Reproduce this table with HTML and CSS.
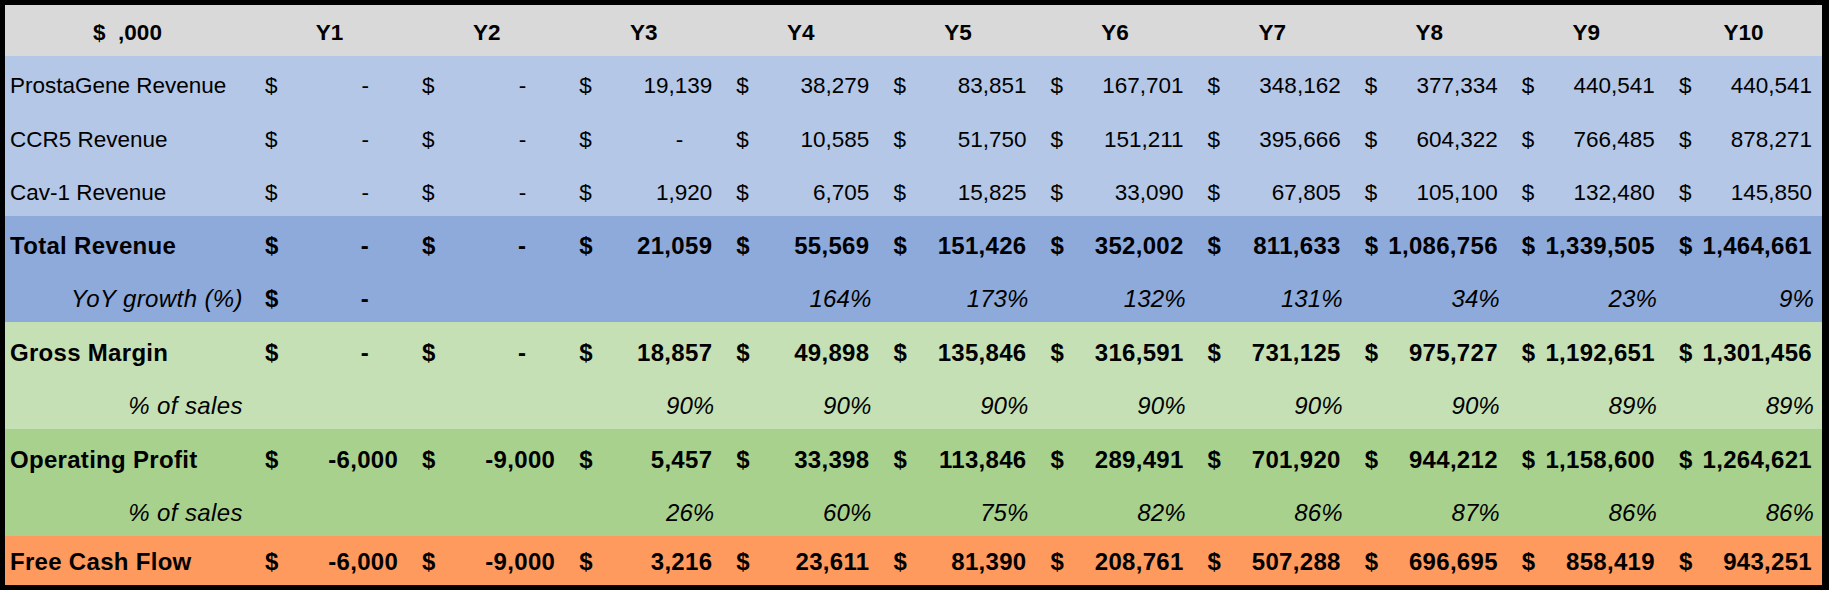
FILE: index.html
```html
<!DOCTYPE html>
<html>
<head>
<meta charset="utf-8">
<link rel="stylesheet" href="styles.css">
</head>
<body>
<div class="sheet">
  <div class="row head h51">
    <div class="lab ctr">$&nbsp; ,000</div>
    <div class="yh">Y1</div><div class="yh">Y2</div><div class="yh">Y3</div><div class="yh">Y4</div><div class="yh">Y5</div>
    <div class="yh">Y6</div><div class="yh">Y7</div><div class="yh">Y8</div><div class="yh">Y9</div><div class="yh">Y10</div>
  </div>

  <div class="row blue1 h53">
    <div class="lab">ProstaGene Revenue</div>
    <div class="cell"><span>$</span><span class="z">-</span></div>
    <div class="cell"><span>$</span><span class="z">-</span></div>
    <div class="cell"><span>$</span><span>19,139</span></div>
    <div class="cell"><span>$</span><span>38,279</span></div>
    <div class="cell"><span>$</span><span>83,851</span></div>
    <div class="cell"><span>$</span><span>167,701</span></div>
    <div class="cell"><span>$</span><span>348,162</span></div>
    <div class="cell"><span>$</span><span>377,334</span></div>
    <div class="cell"><span>$</span><span>440,541</span></div>
    <div class="cell"><span>$</span><span>440,541</span></div>
  </div>

  <div class="row blue1 h54">
    <div class="lab">CCR5 Revenue</div>
    <div class="cell"><span>$</span><span class="z">-</span></div>
    <div class="cell"><span>$</span><span class="z">-</span></div>
    <div class="cell"><span>$</span><span class="z">-</span></div>
    <div class="cell"><span>$</span><span>10,585</span></div>
    <div class="cell"><span>$</span><span>51,750</span></div>
    <div class="cell"><span>$</span><span>151,211</span></div>
    <div class="cell"><span>$</span><span>395,666</span></div>
    <div class="cell"><span>$</span><span>604,322</span></div>
    <div class="cell"><span>$</span><span>766,485</span></div>
    <div class="cell"><span>$</span><span>878,271</span></div>
  </div>

  <div class="row blue1 h53">
    <div class="lab">Cav-1 Revenue</div>
    <div class="cell"><span>$</span><span class="z">-</span></div>
    <div class="cell"><span>$</span><span class="z">-</span></div>
    <div class="cell"><span>$</span><span>1,920</span></div>
    <div class="cell"><span>$</span><span>6,705</span></div>
    <div class="cell"><span>$</span><span>15,825</span></div>
    <div class="cell"><span>$</span><span>33,090</span></div>
    <div class="cell"><span>$</span><span>67,805</span></div>
    <div class="cell"><span>$</span><span>105,100</span></div>
    <div class="cell"><span>$</span><span>132,480</span></div>
    <div class="cell"><span>$</span><span>145,850</span></div>
  </div>

  <div class="row blue2 h53 b">
    <div class="lab">Total Revenue</div>
    <div class="cell"><span>$</span><span class="z">-</span></div>
    <div class="cell"><span>$</span><span class="z">-</span></div>
    <div class="cell"><span>$</span><span>21,059</span></div>
    <div class="cell"><span>$</span><span>55,569</span></div>
    <div class="cell"><span>$</span><span>151,426</span></div>
    <div class="cell"><span>$</span><span>352,002</span></div>
    <div class="cell"><span>$</span><span>811,633</span></div>
    <div class="cell"><span>$</span><span>1,086,756</span></div>
    <div class="cell"><span>$</span><span>1,339,505</span></div>
    <div class="cell"><span>$</span><span>1,464,661</span></div>
  </div>

  <div class="row blue2 h53">
    <div class="lab ri">YoY growth (%)</div>
    <div class="cell b"><span>$</span><span class="z">-</span></div>
    <div class="cell"></div>
    <div class="cell"></div>
    <div class="cell pc"><span>164%</span></div>
    <div class="cell pc"><span>173%</span></div>
    <div class="cell pc"><span>132%</span></div>
    <div class="cell pc"><span>131%</span></div>
    <div class="cell pc"><span>34%</span></div>
    <div class="cell pc"><span>23%</span></div>
    <div class="cell pc"><span>9%</span></div>
  </div>

  <div class="row green1 h54 b">
    <div class="lab">Gross Margin</div>
    <div class="cell"><span>$</span><span class="z">-</span></div>
    <div class="cell"><span>$</span><span class="z">-</span></div>
    <div class="cell"><span>$</span><span>18,857</span></div>
    <div class="cell"><span>$</span><span>49,898</span></div>
    <div class="cell"><span>$</span><span>135,846</span></div>
    <div class="cell"><span>$</span><span>316,591</span></div>
    <div class="cell"><span>$</span><span>731,125</span></div>
    <div class="cell"><span>$</span><span>975,727</span></div>
    <div class="cell"><span>$</span><span>1,192,651</span></div>
    <div class="cell"><span>$</span><span>1,301,456</span></div>
  </div>

  <div class="row green1 h53">
    <div class="lab ri">% of sales</div>
    <div class="cell"></div>
    <div class="cell"></div>
    <div class="cell pc"><span>90%</span></div>
    <div class="cell pc"><span>90%</span></div>
    <div class="cell pc"><span>90%</span></div>
    <div class="cell pc"><span>90%</span></div>
    <div class="cell pc"><span>90%</span></div>
    <div class="cell pc"><span>90%</span></div>
    <div class="cell pc"><span>89%</span></div>
    <div class="cell pc"><span>89%</span></div>
  </div>

  <div class="row green2 h54 b">
    <div class="lab">Operating Profit</div>
    <div class="cell"><span>$</span><span>-6,000</span></div>
    <div class="cell"><span>$</span><span>-9,000</span></div>
    <div class="cell"><span>$</span><span>5,457</span></div>
    <div class="cell"><span>$</span><span>33,398</span></div>
    <div class="cell"><span>$</span><span>113,846</span></div>
    <div class="cell"><span>$</span><span>289,491</span></div>
    <div class="cell"><span>$</span><span>701,920</span></div>
    <div class="cell"><span>$</span><span>944,212</span></div>
    <div class="cell"><span>$</span><span>1,158,600</span></div>
    <div class="cell"><span>$</span><span>1,264,621</span></div>
  </div>

  <div class="row green2 h53">
    <div class="lab ri">% of sales</div>
    <div class="cell"></div>
    <div class="cell"></div>
    <div class="cell pc"><span>26%</span></div>
    <div class="cell pc"><span>60%</span></div>
    <div class="cell pc"><span>75%</span></div>
    <div class="cell pc"><span>82%</span></div>
    <div class="cell pc"><span>86%</span></div>
    <div class="cell pc"><span>87%</span></div>
    <div class="cell pc"><span>86%</span></div>
    <div class="cell pc"><span>86%</span></div>
  </div>

  <div class="row orange h49 b">
    <div class="lab">Free Cash Flow</div>
    <div class="cell"><span>$</span><span>-6,000</span></div>
    <div class="cell"><span>$</span><span>-9,000</span></div>
    <div class="cell"><span>$</span><span>3,216</span></div>
    <div class="cell"><span>$</span><span>23,611</span></div>
    <div class="cell"><span>$</span><span>81,390</span></div>
    <div class="cell"><span>$</span><span>208,761</span></div>
    <div class="cell"><span>$</span><span>507,288</span></div>
    <div class="cell"><span>$</span><span>696,695</span></div>
    <div class="cell"><span>$</span><span>858,419</span></div>
    <div class="cell"><span>$</span><span>943,251</span></div>
  </div>
</div>
</body>
</html>
```

FILE: styles.css
```css
html, body {
  margin: 0;
  padding: 0;
  background: #ffffff;
}

.sheet {
  width: 1817px;
  border-style: solid;
  border-color: #000000;
  border-width: 5px 7px 5px 5px;
  font-family: "Liberation Sans", Arial, sans-serif;
  font-size: 22.5px;
  color: #000000;
}

.row {
  display: grid;
  grid-template-columns: 246px repeat(10, 1fr);
  align-items: end;
}

.h49 { height: 49px; }
.h51 { height: 51px; }
.h53 { height: 53px; }
.h54 { height: 54px; }

.head { background: #d9d9d9; font-weight: bold; }
.blue1 { background: #b4c7e7; }
.blue2 { background: #8eaadb; }
.green1 { background: #c5e0b4; }
.green2 { background: #a9d18e; }
.orange { background: #fe9a5e; }

.lab {
  line-height: 26px;
  padding: 0 6px 10px 5px;
  white-space: nowrap;
}

.lab.ctr { text-align: center; }

.lab.ri {
  text-align: right;
  font-style: italic;
  font-size: 24px;
  letter-spacing: 0.4px;
  padding-right: 8px;
}

.yh {
  line-height: 26px;
  padding-bottom: 10px;
  text-align: center;
}

.cell {
  display: flex;
  justify-content: space-between;
  line-height: 26px;
  padding: 0 10px 10px 14px;
  white-space: nowrap;
  min-height: 26px;
}

.b { font-weight: bold; }
.row.b .cell, .cell.b, .row.b .lab {
  font-size: 24px;
  letter-spacing: 0.3px;
}

.cell .z { margin-right: 29px; }
.row.b .cell .z, .cell.b .z { margin-right: 29px; }

.pc {
  justify-content: flex-end;
  font-style: italic;
  font-size: 24px;
  letter-spacing: 0.1px;
  padding-right: 8px;
}
```
